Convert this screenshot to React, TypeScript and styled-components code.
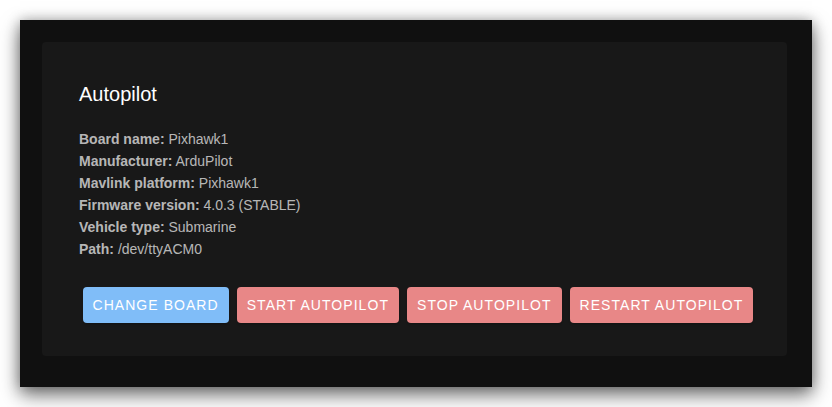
import React from "react";
import styled, { createGlobalStyle } from "styled-components";

const Global = createGlobalStyle`
  html, body { margin: 0; padding: 0; background: #ffffff; }
  body { font-family: "Liberation Sans", Arial, sans-serif; }
`;

const Page = styled.div`
  padding: 20px;
  width: 832px;
  height: 407px;
  box-sizing: border-box;
`;

const Frame = styled.div`
  width: 792px;
  height: 367px;
  box-sizing: border-box;
  background: #101010;
  padding: 22px 25px 31px 22px;
  box-shadow: 0 8px 18px rgba(0, 0, 0, 0.55), 0 0 12px rgba(0, 0, 0, 0.25);
`;

const Card = styled.section`
  background: #181818;
  border-radius: 4px;
  height: 100%;
  box-sizing: border-box;
  padding: 36px 37px 0 37px;
  display: flex;
  flex-direction: column;
`;

const Title = styled.h2`
  margin: 0;
  font-size: 20px;
  line-height: 32px;
  font-weight: 400;
  color: #ffffff;
`;

const InfoList = styled.div`
  margin-top: 18px;
  display: flex;
  flex-direction: column;
`;

const InfoLine = styled.div`
  font-size: 14px;
  line-height: 22px;
  color: rgba(255, 255, 255, 0.7);
`;

const Label = styled.b`
  font-weight: 700;
`;

const Actions = styled.div`
  margin-top: 27px;
  padding-left: 3.5px;
  display: flex;
  gap: 8px;
`;

const Button = styled.button<{ $tone: "primary" | "danger" }>`
  flex: none;
  white-space: nowrap;
  height: 36px;
  padding: 0 10px;
  border: none;
  border-radius: 4px;
  background: ${(p) => (p.$tone === "primary" ? "#80bdf8" : "#e88787")};
  color: #ffffff;
  font-family: "Liberation Sans", Arial, sans-serif;
  font-size: 14px;
  letter-spacing: 1.05px;
  text-transform: uppercase;
  cursor: pointer;
  box-shadow: 0 2px 2px rgba(0, 0, 0, 0.15);
`;

const info: [string, string][] = [
  ["Board name", "Pixhawk1"],
  ["Manufacturer", "ArduPilot"],
  ["Mavlink platform", "Pixhawk1"],
  ["Firmware version", "4.0.3 (STABLE)"],
  ["Vehicle type", "Submarine"],
  ["Path", "/dev/ttyACM0"],
];

export default function App() {
  return (
    <>
      <Global />
      <Page>
        <Frame>
          <Card>
            <Title>Autopilot</Title>
            <InfoList>
              {info.map(([k, v]) => (
                <InfoLine key={k}>
                  <Label>{k}:</Label> {v}
                </InfoLine>
              ))}
            </InfoList>
            <Actions>
              <Button $tone="primary">Change board</Button>
              <Button $tone="danger">Start autopilot</Button>
              <Button $tone="danger">Stop autopilot</Button>
              <Button $tone="danger">Restart autopilot</Button>
            </Actions>
          </Card>
        </Frame>
      </Page>
    </>
  );
}
